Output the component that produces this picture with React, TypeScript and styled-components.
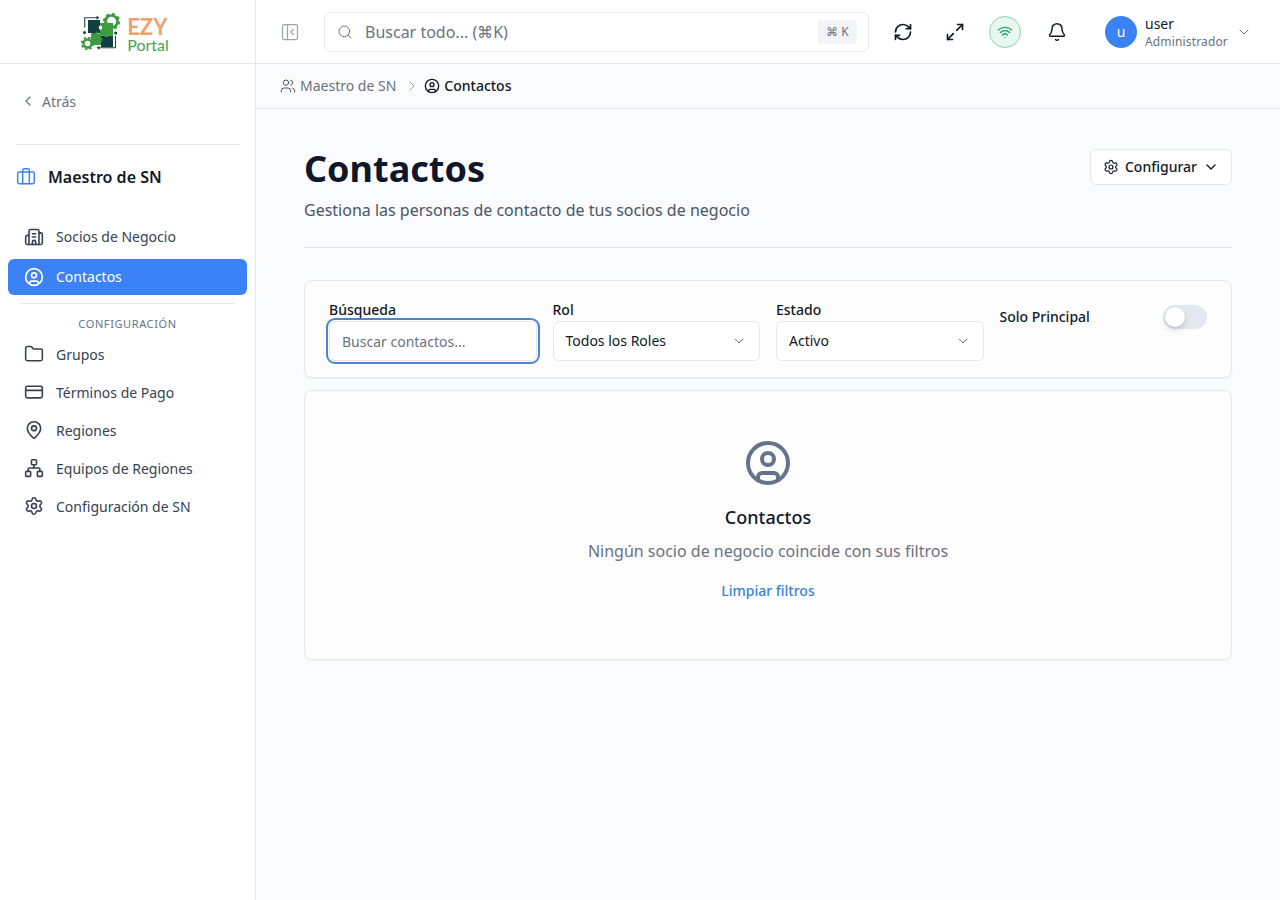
import React, { FC } from "react";
import styled, { createGlobalStyle } from "styled-components";
import {
  Bell,
  Briefcase,
  Building2,
  ChevronDown,
  ChevronLeft,
  ChevronRight,
  CircleUser,
  CreditCard,
  Folder,
  MapPin,
  Maximize2,
  Network,
  PanelLeftClose,
  RefreshCw,
  Search,
  Settings,
  Users,
  Wifi,
} from "lucide-react";

const GlobalStyle = createGlobalStyle`
  html, body {
    margin: 0;
    height: 100%;
    background: #fafbfd;
    font-family: "Noto Sans", "Open Sans", sans-serif;
    color: #111827;
  }
  * { box-sizing: border-box; }
`;

const Logo: FC = () => (
  <LogoWrap>
    <svg width="41" height="40" viewBox="0 0 41 40">
      <path d="M3.7 15.5V5.7H16" fill="none" stroke="#1f4a4a" strokeWidth="1.1" />
      <path d="M15.5 3.7l3 2-3 2z" fill="#1f4a4a" />
      <path d="M34.5 24v11.8H18" fill="none" stroke="#1f4a4a" strokeWidth="1.1" />
      <path d="M18.5 33.8l-3 2 3 2z" fill="#1f4a4a" />
      <circle cx="30.5" cy="9.5" r="7.6" fill="none" stroke="#3d9a3f" strokeWidth="2" strokeDasharray="3 3" />
      <circle cx="30.5" cy="9.5" r="6" fill="#fff" stroke="#3d9a3f" strokeWidth="2.6" />
      <path d="M7 8h12v5.5a2.2 2.2 0 0 0 0 4V21h-4a2.2 2.2 0 0 1-4 0H7z" fill="#123f42" />
      <path d="M20 23.5h3.5a2.2 2.2 0 0 0 4 0H32V35H20v-3.5a2.2 2.2 0 0 1 0-4z" fill="#123f42" />
      <path d="M19 11h4a2.2 2.2 0 0 1 4 0h5v12.5h-4.2a2.4 2.4 0 0 1-4.6 0H19V18a2.2 2.2 0 0 0 0-4.4z" fill="#3d9a3f" />
      <path d="M10 21.5h4.5a2.4 2.4 0 0 0 1-2.5 2.4 2.4 0 0 1 1.5 2.5h3v4a2.2 2.2 0 0 1 0 4V33H10z" fill="#3d9a3f" />
      <circle cx="6.5" cy="31.5" r="5.8" fill="none" stroke="#3d9a3f" strokeWidth="1.8" strokeDasharray="2.4 2.15" />
      <circle cx="6.5" cy="31.5" r="4" fill="#fff" stroke="#3d9a3f" strokeWidth="2.4" />
      <circle cx="3.5" cy="20.5" r="1.5" fill="#123f42" />
      <circle cx="34.7" cy="21" r="1.5" fill="#123f42" />
    </svg>
    <LogoText>
      <LogoEzy>EZY</LogoEzy>
      <LogoPortal>Portal</LogoPortal>
    </LogoText>
  </LogoWrap>
);

const configItems = [
  { label: "Grupos", Icon: Folder },
  { label: "Términos de Pago", Icon: CreditCard },
  { label: "Regiones", Icon: MapPin },
  { label: "Equipos de Regiones", Icon: Network },
  { label: "Configuración de SN", Icon: Settings },
];

const App: FC = () => {
  return (
    <Page>
      <GlobalStyle />
      <Sidebar>
        <LogoBar>
          <Logo />
        </LogoBar>
        <BackRow>
          <ChevronLeft size={16} strokeWidth={1.75} />
          <span>Atrás</span>
        </BackRow>
        <SideDivider />
        <ModuleTitle>
          <Briefcase size={20} color="#3b82f6" strokeWidth={1.75} />
          <span>Maestro de SN</span>
        </ModuleTitle>
        <Nav>
          <NavItem>
            <Building2 size={20} strokeWidth={1.9} />
            <span>Socios de Negocio</span>
          </NavItem>
          <NavItem $active>
            <CircleUser size={20} />
            <span>Contactos</span>
          </NavItem>
          <NavDivider />
          <NavHeading>Configuración</NavHeading>
          {configItems.map(({ label, Icon }) => (
            <ConfigItem key={label}>
              <Icon size={20} strokeWidth={1.9} />
              <span>{label}</span>
            </ConfigItem>
          ))}
        </Nav>
      </Sidebar>
      <Content>
        <TopBar>
          <IconSlot>
            <PanelLeftClose size={20} color="#9ca3af" strokeWidth={1.5} />
          </IconSlot>
          <SearchBox>
            <Search size={16} color="#6b7280" strokeWidth={1.5} />
            <SearchText>Buscar todo... (⌘K)</SearchText>
            <Kbd>⌘ K</Kbd>
          </SearchBox>
          <TopActions>
            <RefreshCw size={20} color="#111827" strokeWidth={2} />
            <Maximize2 size={20} color="#111827" strokeWidth={2} />
            <WifiBadge>
              <Wifi size={16} color="#22a06b" strokeWidth={2} />
            </WifiBadge>
            <Bell size={20} color="#111827" strokeWidth={1.75} />
          </TopActions>
          <UserBlock>
            <Avatar>u</Avatar>
            <UserText>
              <UserName>user</UserName>
              <UserRole>Administrador</UserRole>
            </UserText>
            <ChevronDown size={16} color="#6b7280" strokeWidth={1.5} />
          </UserBlock>
        </TopBar>
        <Breadcrumb>
          <Users size={16} strokeWidth={1.5} color="#4b5563" />
          <CrumbLink>Maestro de SN</CrumbLink>
          <ChevronRight size={16} color="#9ca3af" strokeWidth={1.5} />
          <CircleUser size={16} color="#111827" strokeWidth={2} />
          <CrumbCurrent>Contactos</CrumbCurrent>
        </Breadcrumb>
        <Main>
          <Header>
            <div>
              <Title>Contactos</Title>
              <Subtitle>Gestiona las personas de contacto de tus socios de negocio</Subtitle>
            </div>
            <ConfigButton>
              <Settings size={16} strokeWidth={1.75} />
              <span>Configurar</span>
              <ChevronDown size={16} strokeWidth={2} />
            </ConfigButton>
          </Header>
          <FilterCard>
            <Field>
              <FieldLabel>Búsqueda</FieldLabel>
              <SearchInput placeholder="Buscar contactos..." />
            </Field>
            <Field>
              <FieldLabel>Rol</FieldLabel>
              <SelectBox>
                <span>Todos los Roles</span>
                <ChevronDown size={16} color="#6b7280" strokeWidth={1.5} />
              </SelectBox>
            </Field>
            <Field>
              <FieldLabel>Estado</FieldLabel>
              <SelectBox>
                <span>Activo</span>
                <ChevronDown size={16} color="#6b7280" strokeWidth={1.5} />
              </SelectBox>
            </Field>
            <ToggleField>
              <FieldLabel>Solo Principal</FieldLabel>
              <Toggle>
                <Knob />
              </Toggle>
            </ToggleField>
          </FilterCard>
          <EmptyCard>
            <CircleUser size={48} color="#64748b" strokeWidth={2} />
            <EmptyTitle>Contactos</EmptyTitle>
            <EmptyText>Ningún socio de negocio coincide con sus filtros</EmptyText>
            <ClearLink>Limpiar filtros</ClearLink>
          </EmptyCard>
        </Main>
      </Content>
    </Page>
  );
};

const Page = styled.div`
  display: flex;
  min-height: 900px;
  height: 900px;
  overflow: hidden;
`;

const Sidebar = styled.aside`
  width: 256px;
  flex-shrink: 0;
  background: #fff;
  border-right: 1px solid #e5e7eb;
  display: flex;
  flex-direction: column;
`;

const LogoBar = styled.div`
  height: 64px;
  border-bottom: 1px solid #e5e7eb;
  display: flex;
  align-items: center;
  justify-content: center;
`;

const LogoWrap = styled.div`
  display: flex;
  align-items: center;
  gap: 5px;
  margin-right: 5px;
`;

const LogoText = styled.div`
  display: flex;
  flex-direction: column;
  padding-top: 5px;
  font-family: "Lato", sans-serif;
`;

const LogoEzy = styled.span`
  font-size: 22px;
  line-height: 21px;
  font-weight: 700;
  color: #f2a06f;
`;

const LogoPortal = styled.span`
  font-size: 16px;
  line-height: 15px;
  color: #4c9f50;
`;

const BackRow = styled.div`
  display: flex;
  align-items: center;
  gap: 6px;
  padding: 0 20px;
  margin-top: 28px;
  height: 18px;
  font-size: 14px;
  color: #6b7280;
`;

const SideDivider = styled.div`
  height: 1px;
  background: #e5e7eb;
  margin: 34px 16px 0;
`;

const ModuleTitle = styled.div`
  display: flex;
  align-items: center;
  gap: 12px;
  padding: 0 16px;
  margin-top: 20px;
  height: 24px;
  font-size: 16px;
  font-weight: 600;
  color: #111827;
`;

const Nav = styled.nav`
  display: flex;
  flex-direction: column;
  padding: 0 8px;
  margin-top: 30px;
`;

const NavItem = styled.div<{ $active?: boolean }>`
  display: flex;
  align-items: center;
  gap: 12px;
  height: 36px;
  padding: 0 16px;
  margin-bottom: 4px;
  border-radius: 6px;
  font-size: 14px;
  background: ${(p) => (p.$active ? "#3b82f6" : "transparent")};
  color: ${(p) => (p.$active ? "#fff" : "#374151")};

  & > span {
    margin-bottom: 2px;
  }
`;

const ConfigItem = styled(NavItem)`
  height: 38px;
  margin-bottom: 0;

  & > span {
    margin-bottom: 0;
  }
`;

const NavDivider = styled.div`
  height: 1px;
  background: #e5e7eb;
  margin: 4px 12px 0;
`;

const NavHeading = styled.div`
  text-align: center;
  font-size: 11px;
  letter-spacing: 0.6px;
  line-height: 16px;
  text-transform: uppercase;
  color: #64748b;
  margin: 12px 0 3px;
`;

const Content = styled.div`
  flex: 1;
  min-width: 0;
  display: flex;
  flex-direction: column;
`;

const TopBar = styled.header`
  height: 64px;
  flex-shrink: 0;
  background: #fff;
  border-bottom: 1px solid #e5e7eb;
  display: flex;
  align-items: center;
  padding: 0 0 0 24px;
`;

const IconSlot = styled.div`
  display: flex;
  width: 20px;
  flex-shrink: 0;
`;

const SearchBox = styled.div`
  display: flex;
  align-items: center;
  flex-shrink: 0;
  width: 545px;
  height: 40px;
  margin-left: 24px;
  padding: 0 11px 0 12px;
  background: #fff;
  border: 1px solid #e5e7eb;
  border-radius: 6px;
`;

const SearchText = styled.span`
  flex: 1;
  margin-left: 12px;
  font-size: 16px;
  color: #6b7280;
`;

const Kbd = styled.span`
  display: flex;
  align-items: center;
  justify-content: center;
  width: 39px;
  height: 24px;
  border-radius: 4px;
  background: #f3f4f6;
  font-size: 12px;
  color: #6b7280;
`;

const TopActions = styled.div`
  display: flex;
  align-items: center;
  flex-shrink: 0;
  gap: 32px;
  margin-left: 24px;
`;

const WifiBadge = styled.div`
  display: flex;
  align-items: center;
  justify-content: center;
  width: 32px;
  height: 32px;
  margin: 0 -6px 0 -8px;
  border-radius: 50%;
  background: #e8f7ef;
  border: 1px solid #86d5ac;
`;

const UserBlock = styled.div`
  display: flex;
  align-items: center;
  flex-shrink: 0;
  margin-left: 38px;
`;

const Avatar = styled.div`
  display: flex;
  align-items: center;
  justify-content: center;
  width: 32px;
  height: 32px;
  border-radius: 50%;
  background: #3b82f6;
  color: #fff;
  font-size: 14px;
`;

const UserText = styled.div`
  display: flex;
  flex-direction: column;
  margin: 0 8px;
  padding-top: 2px;
`;

const UserName = styled.span`
  font-size: 14px;
  line-height: 18px;
  color: #111827;
`;

const UserRole = styled.span`
  margin-top: 1px;
  font-size: 12px;
  line-height: 16px;
  letter-spacing: 0.15px;
  color: #6b7280;
`;

const Breadcrumb = styled.div`
  height: 45px;
  flex-shrink: 0;
  display: flex;
  align-items: center;
  padding: 0 24px;
  border-bottom: 1px solid #e5e7eb;
  font-size: 14px;
  gap: 4px;
`;

const CrumbLink = styled.span`
  color: #6b7280;
  margin: 0 4px 2px 0;
`;

const CrumbCurrent = styled.span`
  color: #111827;
  font-weight: 500;
  margin-bottom: 2px;
`;

const Main = styled.main`
  flex: 1;
  padding: 40px 48px;
`;

const Header = styled.div`
  display: flex;
  justify-content: space-between;
  align-items: flex-start;
  height: 99px;
  border-bottom: 1px solid #e5e7eb;
`;

const Title = styled.h1`
  margin: 0;
  font-size: 36px;
  line-height: 40px;
  font-weight: 700;
  color: #0f172a;
`;

const Subtitle = styled.p`
  margin: 9px 0 0;
  font-size: 16px;
  line-height: 24px;
  color: #4b5563;
`;

const ConfigButton = styled.button`
  display: flex;
  align-items: center;
  gap: 6px;
  height: 36px;
  padding: 0 12px;
  background: #fff;
  border: 1px solid #e5e7eb;
  border-radius: 6px;
  font: inherit;
  font-size: 14px;
  font-weight: 500;
  color: #111827;

  & > span {
    margin-bottom: 2px;
  }
`;

const FilterCard = styled.section`
  display: grid;
  grid-template-columns: repeat(4, 1fr);
  gap: 16px;
  margin-top: 32px;
  height: 98px;
  padding: 20px 24px;
  background: #fdfdfe;
  border: 1px solid #e5e7eb;
  border-radius: 8px;
  box-shadow: 0 1px 2px rgba(0, 0, 0, 0.05);
`;

const Field = styled.div`
  display: flex;
  flex-direction: column;
`;

const FieldLabel = styled.label`
  font-size: 14px;
  line-height: 18px;
  margin-bottom: 2px;
  font-weight: 500;
  color: #111827;
`;

const SearchInput = styled.input`
  width: 100%;
  height: 40px;
  padding: 0 12px;
  background: #fff;
  border: 1px solid #e5e7eb;
  border-radius: 6px;
  outline: 2px solid #4a86d0;
  outline-offset: 1px;
  font: inherit;
  font-size: 14px;
  &::placeholder {
    color: #6b7280;
    opacity: 1;
  }
`;

const SelectBox = styled.div`
  display: flex;
  align-items: center;
  justify-content: space-between;
  height: 40px;
  padding: 0 12px;
  background: #fff;
  border: 1px solid #e5e7eb;
  border-radius: 6px;
  font-size: 14px;
  color: #111827;

  & > span {
    margin-bottom: 2px;
  }
`;

const ToggleField = styled.div`
  display: flex;
  align-items: flex-start;
  justify-content: space-between;
  padding-top: 7px;
`;

const Toggle = styled.div`
  width: 44px;
  height: 24px;
  margin-top: -3px;
  padding: 2px;
  border-radius: 12px;
  background: #e2e8f0;
`;

const Knob = styled.div`
  width: 20px;
  height: 20px;
  border-radius: 50%;
  background: #fff;
  box-shadow: 0 4px 6px rgba(0, 0, 0, 0.1), 0 1px 3px rgba(0, 0, 0, 0.1);
`;

const EmptyCard = styled.section`
  display: flex;
  flex-direction: column;
  align-items: center;
  margin-top: 12px;
  height: 270px;
  padding-top: 48px;
  background: #fdfdfe;
  border: 1px solid #e5e7eb;
  border-radius: 8px;
  box-shadow: 0 1px 2px rgba(0, 0, 0, 0.05);
`;

const EmptyTitle = styled.h3`
  margin: 16px 0 0;
  font-size: 18px;
  line-height: 28px;
  font-weight: 500;
  color: #111827;
`;

const EmptyText = styled.p`
  margin: 8px 0 0;
  font-size: 16px;
  line-height: 24px;
  color: #6b7280;
`;

const ClearLink = styled.a`
  margin-top: 18px;
  font-size: 14px;
  line-height: 20px;
  font-weight: 500;
  color: #3b82d6;
`;

export default App;
